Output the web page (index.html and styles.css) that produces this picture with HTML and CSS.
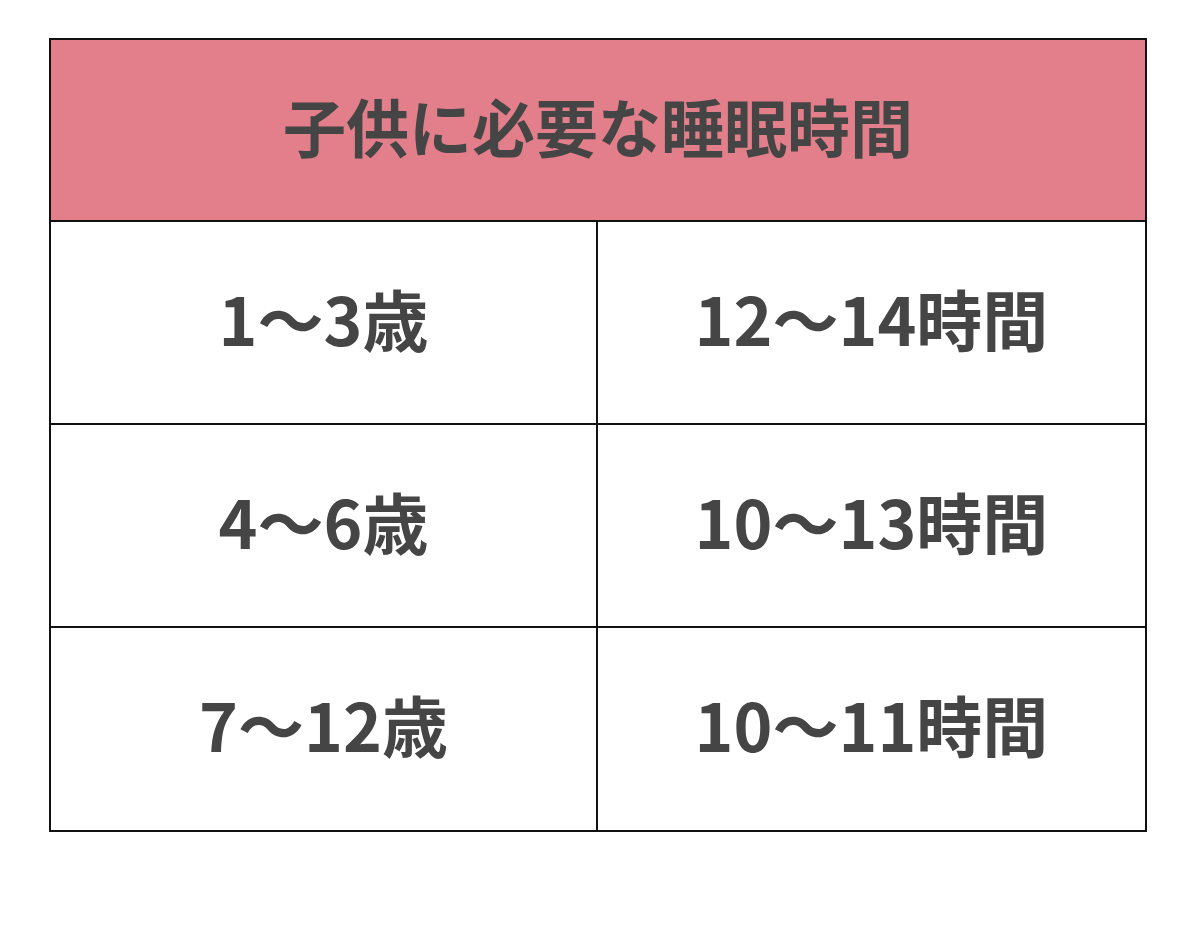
FILE: index.html
```html
<!DOCTYPE html>
<html lang="ja">
<head>
<meta charset="utf-8">
<link rel="stylesheet" href="styles.css">
</head>
<body>
<div class="page">
  <div class="sleep-table">
    <div class="head">子供に必要な睡眠時間</div>
    <div class="cell">1～3歳</div>
    <div class="cell right">12～14時間</div>
    <div class="cell">4～6歳</div>
    <div class="cell right">10～13時間</div>
    <div class="cell">7～12歳</div>
    <div class="cell right">10～11時間</div>
  </div>
</div>
</body>
</html>
```
FILE: styles.css
```css
html, body {
  margin: 0;
  padding: 0;
  background: #ffffff;
}
.page {
  width: 1200px;
  height: 928px;
  padding: 38px 0 0 49px;
  box-sizing: border-box;
}
.sleep-table {
  width: 1098px;
  box-sizing: border-box;
  border: 2px solid #111;
  display: grid;
  grid-template-columns: 1fr 1fr;
  grid-template-rows: 182px 203px 203px 202px;
  font-family: "Noto Sans CJK JP", "Noto Sans", sans-serif;
  font-weight: 700;
  color: #454545;
}
.head {
  grid-column: 1 / 3;
  background: #e27f8b;
  border-bottom: 2px solid #111;
  display: flex;
  align-items: center;
  justify-content: center;
  font-size: 63px;
  padding-bottom: 12px;
  box-sizing: border-box;
}
.cell {
  display: flex;
  align-items: center;
  justify-content: center;
  font-size: 66px;
  padding-bottom: 12px;
  border-bottom: 2px solid #111;
  border-right: 2px solid #111;
  box-sizing: border-box;
}
.cell.right {
  border-right: none;
}
.cell:nth-last-child(-n+2) {
  border-bottom: none;
}
```
